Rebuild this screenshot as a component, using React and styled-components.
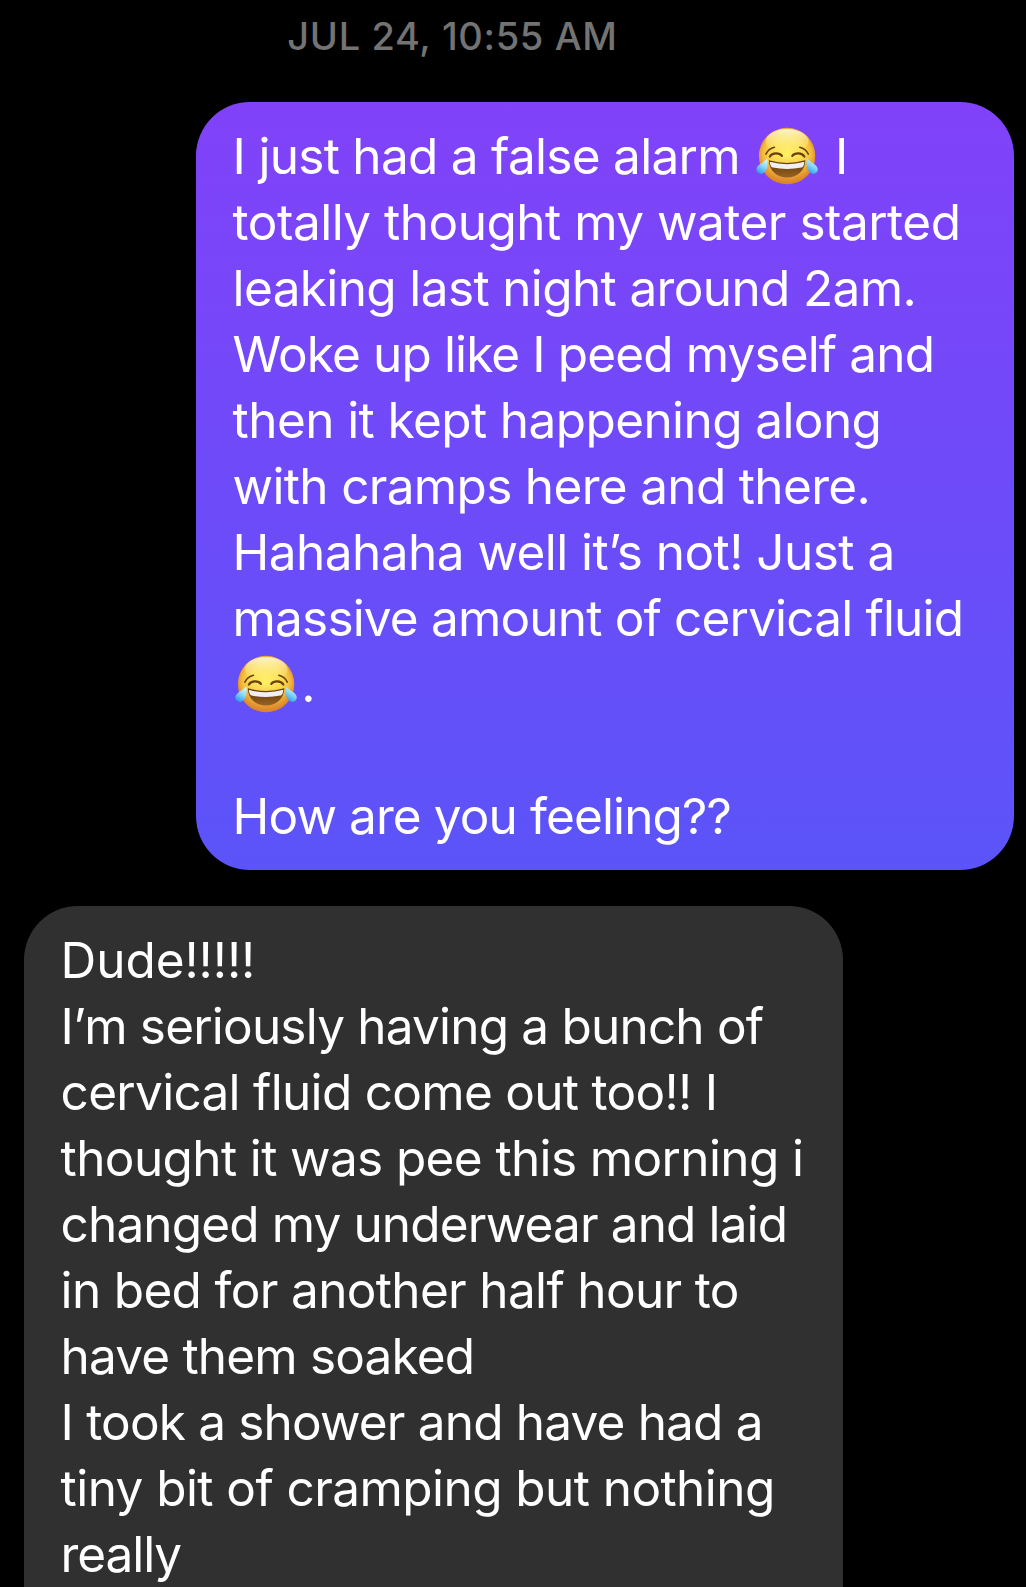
import { useId } from 'react';
import styled, { createGlobalStyle } from 'styled-components';

// spacing = extra letter spacing for the line, in px
const messages = [
  {
    id: 1,
    fromSelf: true,
    lines: [
      { text: 'I just had a false alarm :joy: I', spacing: -0.71 },
      { text: 'totally thought my water started', spacing: -0.51 },
      { text: 'leaking last night around 2am.', spacing: -0.63 },
      { text: 'Woke up like I peed myself and', spacing: -0.87 },
      { text: 'then it kept happening along', spacing: -0.59 },
      { text: 'with cramps here and there.', spacing: -0.67 },
      { text: 'Hahahaha well it’s not! Just a', spacing: -0.54 },
      { text: 'massive amount of cervical fluid', spacing: -0.83 },
      { text: ':joy:.', spacing: 0 },
      { text: '', spacing: 0 },
      { text: 'How are you feeling??', spacing: -0.89 }
    ]
  },
  {
    id: 2,
    fromSelf: false,
    cut: true,
    lines: [
      { text: 'Dude!!!!!', spacing: -0.08 },
      { text: 'I’m seriously having a bunch of', spacing: -0.8 },
      { text: 'cervical fluid come out too!! I', spacing: -0.7 },
      { text: 'thought it was pee this morning i', spacing: -0.62 },
      { text: 'changed my underwear and laid', spacing: -0.87 },
      { text: 'in bed for another half hour to', spacing: -0.66 },
      { text: 'have them soaked', spacing: -0.82 },
      { text: 'I took a shower and have had a', spacing: -0.82 },
      { text: 'tiny bit of cramping but nothing', spacing: -0.57 },
      { text: 'really', spacing: -1.1 }
    ]
  }
];

function JoyEmoji() {
  const id = useId();
  const face = `face${id}`;
  const shade = `shade${id}`;
  const shine = `shine${id}`;
  const tear = `tear${id}`;
  const mouth = `mouth${id}`;

  return (
    <Emoji viewBox="0 0 68 60" role="img" aria-label="face with tears of joy">
      <defs>
        <radialGradient id={face} cx="0.5" cy="0.47" r="0.54">
          <stop offset="0" stopColor="#fff065" />
          <stop offset="0.55" stopColor="#fbdc50" />
          <stop offset="0.8" stopColor="#f3b93c" />
          <stop offset="1" stopColor="#db7f20" />
        </radialGradient>
        <linearGradient id={shade} x1="0" y1="0" x2="0" y2="1">
          <stop offset="0.5" stopColor="#dd8424" stopOpacity="0" />
          <stop offset="1" stopColor="#d9802a" stopOpacity="0.75" />
        </linearGradient>
        <linearGradient id={shine} x1="0" y1="0" x2="0" y2="1">
          <stop offset="0" stopColor="#fffce0" stopOpacity="0.9" />
          <stop offset="1" stopColor="#fff27a" stopOpacity="0" />
        </linearGradient>
        <linearGradient id={tear} x1="0.7" y1="0" x2="0.3" y2="1">
          <stop offset="0" stopColor="#d8f6fb" />
          <stop offset="0.5" stopColor="#86d5f8" />
          <stop offset="1" stopColor="#2c96ea" />
        </linearGradient>
        <linearGradient id={mouth} x1="0" y1="0" x2="0" y2="1">
          <stop offset="0" stopColor="#5f3509" />
          <stop offset="1" stopColor="#986222" />
        </linearGradient>
      </defs>
      <circle cx="34.1" cy="30" r="28.2" fill={`url(#${face})`} />
      <circle cx="34.1" cy="30" r="28.2" fill={`url(#${shade})`} />
      <ellipse cx="34.1" cy="15.5" rx="21.5" ry="12.5" fill={`url(#${shine})`} />
      <g fill="none" stroke="#6a400d" strokeLinecap="round">
        <path strokeWidth="1.6" d="M12.9 28.1 Q15.6 22.8 21.4 21.3" />
        <path strokeWidth="1.6" d="M55.3 28.1 Q52.6 22.8 46.8 21.3" />
        <path strokeWidth="2.3" d="M16.9 30.5 C19.3 26.6 26.2 26.5 28.9 29.9" />
        <path strokeWidth="2.3" d="M51.3 30.5 C48.9 26.6 42 26.5 39.3 29.9" />
      </g>
      <path
        fill={`url(#${mouth})`}
        d="M15.9 34.3 Q34.1 39.6 52.3 34.3 C52.2 44.8 44.3 51.5 34.1 51.5 C23.9 51.5 16 44.8 15.9 34.3Z"
      />
      <path
        fill="#f0f0f4"
        d="M16.8 35.8 Q34.1 40.6 51.4 35.8 C51.1 39.4 50.2 41 48.5 41.6 Q34.1 44.4 19.7 41.6 C18 41 17.1 39.4 16.8 35.8Z"
      />
      <path
        fill={`url(#${tear})`}
        d="M14.3 32.6 C14.8 37 15 41.5 12.7 44.8 C10.6 47.9 7.1 49 4.7 46.6 C2.3 44 3.4 40.6 6.8 38.3 C9.8 36.3 11.9 35 14.3 32.6Z"
      />
      <path
        fill={`url(#${tear})`}
        d="M53.9 32.6 C53.4 37 53.2 41.5 55.5 44.8 C57.6 47.9 61.1 49 63.5 46.6 C65.9 44 64.8 40.6 61.4 38.3 C58.4 36.3 56.3 35 53.9 32.6Z"
      />
    </Emoji>
  );
}

function ChatMessage({ fromSelf, cut, lines }) {
  return (
    <Bubble $self={fromSelf} $cut={cut}>
      {lines.map(({ text, spacing }, i) => {
        const parts = text.split(':joy:');
        return (
          <Line key={i} $spacing={spacing}>
            {parts[0]}
            {parts.length > 1 && <JoyEmoji />}
            {parts[1]}
          </Line>
        );
      })}
    </Bubble>
  );
}

function App() {
  return (
    <>
      <GlobalStyle />
      <Chat>
        <DateHeader>JUL 24, 10:55 AM</DateHeader>
        <MessageList>
          {messages.map(({ id, ...message }) => (
            <ChatMessage key={id} {...message} />
          ))}
        </MessageList>
      </Chat>
    </>
  );
}

const GlobalStyle = createGlobalStyle`
  body {
    margin: 0;
    background: #000;
  }
`;

const Chat = styled.main`
  box-sizing: border-box;
  width: 1026px;
  height: 1587px;
  overflow: hidden;
  background: #000;
  font-family: Inter, 'Liberation Sans', sans-serif;
`;

const DateHeader = styled.header`
  box-sizing: border-box;
  width: 905px;
  height: 102px;
  padding-top: 13px;
  font-size: 38px;
  font-weight: 500;
  line-height: 46px;
  letter-spacing: 0.65px;
  text-align: center;
  color: #737373;
`;

const MessageList = styled.div`
  display: flex;
  flex-direction: column;
  gap: 36px;
  padding: 0 12px 0 24px;
`;

const Bubble = styled.div`
  box-sizing: border-box;
  align-self: ${(props) => (props.$self ? 'flex-end' : 'flex-start')};
  width: ${(props) => (props.$self ? '818px' : '819px')};
  padding: 21px 30px 21px 36.6px;
  /* a cut bubble runs on below the fold */
  border-radius: ${(props) => (props.$cut ? '54px 54px 0 0' : '54px')};
  background: ${(props) => (props.$self ? 'linear-gradient(#8142f8, #5b54f8)' : '#303030')};
  color: #fff;
`;

const Line = styled.p`
  height: 66px;
  margin: 0;
  font-size: 49.5px;
  line-height: 66px;
  letter-spacing: ${(props) => props.$spacing}px;
  white-space: pre;
`;

const Emoji = styled.svg`
  width: 68px;
  height: 60px;
  margin: 0 1.2px 0 -0.6px;
  vertical-align: -12px;
`;

export default App;
